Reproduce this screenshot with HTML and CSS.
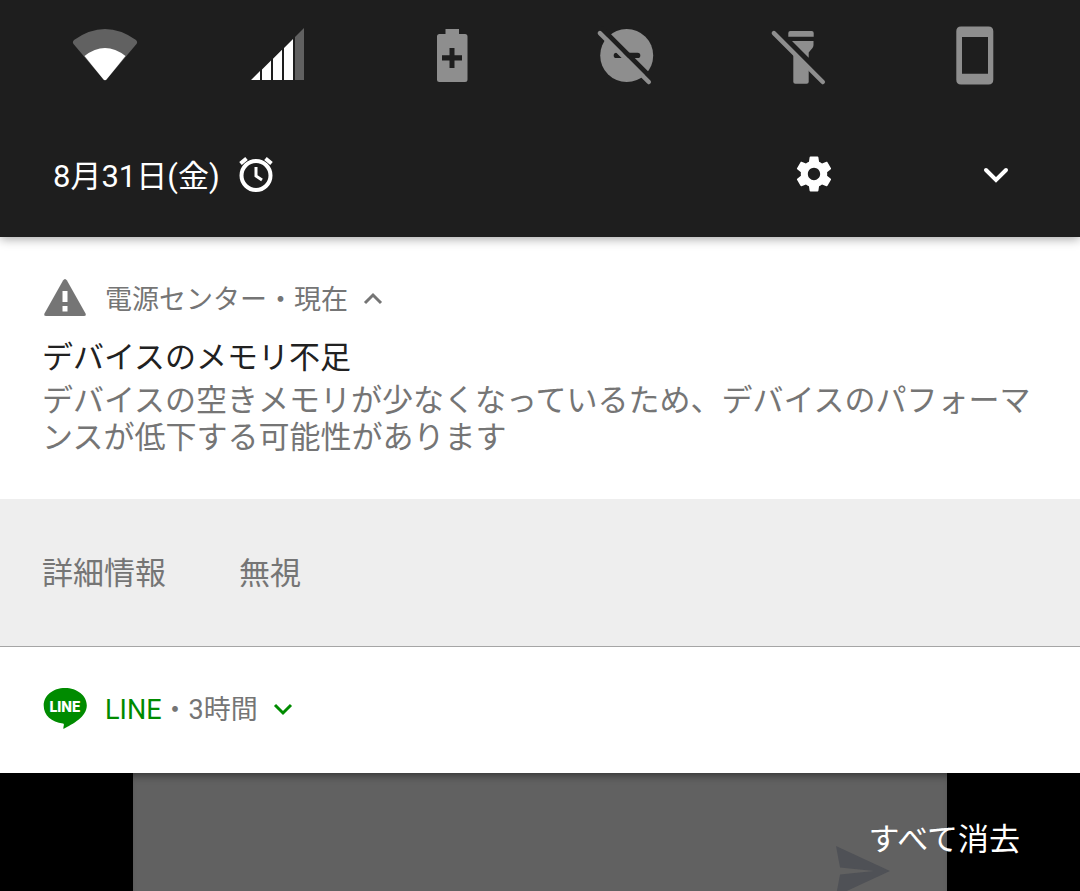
FILE: index.html
```html
<!DOCTYPE html>
<html lang="ja">
<head>
  <meta charset="UTF-8" />
  <meta name="viewport" content="width=device-width, initial-scale=1" />
  <title>通知</title>
  <link rel="stylesheet" href="styles.css">
</head>
<body>

  <header class="shade">
    <div class="toggles">
      <button type="button" class="toggle" aria-label="Wi-Fi">
        <svg viewBox="0 0 72 72">
          <path class="dim" d="M5 20 Q36 -2 67 20 Q69 22 67.500 24 L37.500 59.500 Q36 61 34.500 59.500 L4.500 24 Q3 22 5 20Z" />
          <path class="on" d="M15.500 36 Q36 20 56.500 36 L37.500 59.500 Q36 61 34.500 59.500Z" />
        </svg>
      </button>
      <button type="button" class="toggle" aria-label="モバイルデータ">
        <svg viewBox="0 0 72 72">
          <path class="on" d="M8 60 L17 51 V60Z M19 60 V49.500 L28 40.500 V60Z M30 60 V38.700 L39 29.700 V60Z M41 60 V28 L50 19 V60Z" />
          <path class="dim" d="M52 60 V17 L61 8 V60Z" />
        </svg>
      </button>
      <button type="button" class="toggle" aria-label="バッテリーセーバー">
        <svg viewBox="0 0 72 72">
          <path class="off" d="M28.500 9 H42 V14 H48 Q50.500 14 50.500 16.500 V59.500 Q50.500 62 48 62 H22.500 Q20 62 20 59.500 V16.500 Q20 14 22.500 14 H28.500Z" />
          <path class="cut" d="M32.500 28 H37.500 V35.300 H45 V40.500 H37.500 V48 H32.500 V40.500 H25 V35.300 H32.500Z" />
        </svg>
      </button>
      <button type="button" class="toggle" aria-label="サイレント モード">
        <svg viewBox="0 0 72 72">
          <circle class="off" cx="35.700" cy="35.500" r="26.500" />
          <rect class="cut" x="22.700" y="32.700" width="26.600" height="5.300" rx="2.600" />
          <path class="cut-line" d="M10 7.700 L62 59.700" />
          <path class="slash" d="M8.900 13.100 L57.800 62" />
        </svg>
      </button>
      <button type="button" class="toggle" aria-label="ライト">
        <svg viewBox="0 0 72 72">
          <path class="off" d="M25.300 11 H46.700 Q48.700 11 48.700 13 V16.700 H23.300 V13 Q23.300 11 25.300 11Z" />
          <path class="off" d="M27 21 H48.500 V25 Q48.500 26.500 47.500 28 L43.700 32.500 V37.700Z" />
          <path class="off" d="M28.300 32.500 L43.700 48 V61.700 Q43.700 63.700 41.700 63.700 H30.300 Q28.300 63.700 28.300 61.700Z" />
          <path class="slash" d="M8.900 13.100 L57.800 62" />
        </svg>
      </button>
      <button type="button" class="toggle" aria-label="画面の自動回転">
        <svg viewBox="0 0 72 72">
          <path class="off" fill-rule="evenodd" d="M22 6.500 H49.500 Q54.300 6.500 54.300 11.300 V59.700 Q54.300 64.500 49.500 64.500 H22 Q17.300 64.500 17.300 59.700 V11.300 Q17.300 6.500 22 6.500Z M23 17 V53.700 H49 V17Z" />
        </svg>
      </button>
    </div>

    <div class="status">
      <button type="button" class="date">
        <span>8月31日(金)</span>
        <svg class="alarm" viewBox="0 0 40 40" aria-hidden="true">
          <circle cx="20" cy="21.500" r="14.500" />
          <path d="M20 13 V22 L26 26" />
          <path class="bells" d="M4.500 9.500 L10.500 4.500 M29.500 4.500 L35.500 9.500" />
        </svg>
      </button>
      <button type="button" class="icon-btn" aria-label="設定">
        <svg viewBox="-0.5 -0.5 25 25">
          <path class="on" d="M19.430 12.980c.04-.32.07-.64.07-.98s-.03-.66-.07-.98l2.110-1.650c.19-.15.24-.42.12-.64l-2-3.460c-.12-.22-.39-.3-.61-.22l-2.490 1c-.52-.4-1.080-.73-1.690-.98l-.38-2.650C14.460 2.180 14.250 2 14 2h-4c-.25 0-.46.18-.49.42l-.38 2.650c-.61.25-1.170.59-1.690.98l-2.490-1c-.23-.09-.49 0-.61.22l-2 3.460c-.13.22-.07.49.12.64l2.110 1.650c-.04.32-.07.65-.07.98s.03.66.07.98l-2.110 1.650c-.19.15-.24.42-.12.64l2 3.460c.12.22.39.3.61.22l2.490-1c.52.4 1.080.73 1.690.98l.38 2.650c.03.24.24.42.49.42h4c.25 0 .46-.18.49-.42l.38-2.650c.61-.25 1.170-.59 1.690-.98l2.490 1c.23.09.49 0 .61-.22l2-3.460c.12-.22.07-.49-.12-.64l-2.110-1.650zM12 15.500c-1.930 0-3.500-1.570-3.500-3.500s1.570-3.500 3.500-3.500 3.500 1.570 3.500 3.500-1.570 3.500-3.500 3.500z" />
        </svg>
      </button>
      <button type="button" class="icon-btn" aria-label="展開">
        <svg viewBox="0 0 44 44">
          <path class="chevron" d="M12 18 L22 28 L32 18" />
        </svg>
      </button>
    </div>
  </header>

  <main>
    <article class="notice">
      <div class="notice-body">
        <div class="notice-head">
          <svg class="app-icon" viewBox="0 0 44 44" aria-hidden="true">
            <path fill="#757575" d="M20 3.500 Q22 0.500 24 3.500 L42.500 36.500 Q43.500 39 41 39 H3 Q0.500 39 1.500 36.500Z" />
            <path fill="#fff" d="M19.500 14 H24.500 V25 H19.500Z M19.500 29 H24.500 V34.500 H19.500Z" />
          </svg>
          <span class="app-title">電源センター・現在</span>
          <button type="button" class="expand" aria-label="折りたたむ">
            <svg viewBox="0 0 24 24"><path d="M4 16 L12 8 L20 16" /></svg>
          </button>
        </div>
        <h2>デバイスのメモリ不足</h2>
        <p>デバイスの空きメモリが少なくなっているため、デバイスのパフォーマンスが低下する可能性があります</p>
      </div>
      <div class="actions">
        <button type="button">詳細情報</button>
        <button type="button">無視</button>
      </div>
    </article>

    <article class="notice line">
      <div class="notice-head">
        <svg class="app-icon" viewBox="0 0 44 44" aria-hidden="true">
          <path fill="#008b00" d="M22 1 C34 1 43.800 8.500 43.800 18.500 C43.800 30 29.500 37 20.500 42 C20 39.500 22 37 20 36.500 C8.500 35 0.700 28.500 0.700 18.500 C0.700 8.500 10 1 22 1Z" />
          <text class="logo-text" x="22" y="25" text-anchor="middle">LINE</text>
        </svg>
        <span class="app-title"><span class="app-name">LINE</span>・3時間</span>
        <button type="button" class="expand" aria-label="展開">
          <svg viewBox="0 0 24 24"><path d="M4 8 L12 16 L20 8" /></svg>
        </button>
      </div>
    </article>
  </main>

  <footer class="backdrop">
    <div class="app-behind">
      <svg viewBox="0 0 54 50" aria-hidden="true">
        <path fill="#4f5156" d="M0 0 L54 25 L0 50 L4 28.500 L38 25 L4 21.500Z" />
      </svg>
    </div>
    <button type="button" class="clear">すべて消去</button>
  </footer>

</body>
</html>
```
FILE: styles.css
```css
* {
  box-sizing: border-box;
}

body {
  margin: 0;
  min-height: 100vh;
  display: flex;
  flex-direction: column;
  background: #000;
  color: #757575;
  font-family: Roboto, "Noto Sans CJK JP", sans-serif;
  font-size: 31px;
}

button {
  padding: 0;
  border: none;
  background: none;
  color: inherit;
  font: inherit;
  cursor: pointer;
}

svg {
  display: block;
}

/* quick settings */
.shade {
  position: relative;
  background: #1e1e1e;
  color: #fff;
  box-shadow: 0 2px 10px rgba(0, 0, 0, 0.35);
}

.toggles {
  display: grid;
  grid-template-columns: repeat(6, 1fr);
  padding: 20px 18px 0;
}

.toggle {
  display: flex;
  justify-content: center;
}

.toggle svg {
  width: 72px;
  height: 72px;
}

.on {
  fill: #fff;
}

.dim {
  fill: #616161;
}

.off {
  fill: #8e8e8e;
}

.cut {
  fill: #1e1e1e;
}

.cut-line {
  stroke: #1e1e1e;
  stroke-width: 5;
}

.slash {
  stroke: #8e8e8e;
  stroke-width: 4.5;
  stroke-linecap: round;
}

.status {
  display: flex;
  align-items: center;
  gap: 138px;
  height: 145px;
  padding: 18px 62px 0 53px;
}

.date {
  display: flex;
  align-items: center;
  gap: 16px;
  margin-right: auto;
}

.alarm {
  width: 40px;
  height: 40px;
  fill: none;
  stroke: #fff;
  stroke-width: 4;
}

.alarm path {
  stroke-width: 3;
}

.alarm .bells {
  stroke-width: 4;
}

.icon-btn svg {
  width: 44px;
  height: 44px;
}

.chevron {
  fill: none;
  stroke: #fff;
  stroke-width: 4;
  stroke-linecap: round;
}

/* notifications */
main {
  background: #fff;
}

.notice-body {
  padding: 40px 42px 43px;
}

.notice-head {
  display: flex;
  align-items: center;
  height: 44px;
  padding-left: 1px;
  font-size: 27px;
}

.app-icon {
  width: 44px;
  height: 44px;
  margin-right: 18px;
}

.app-title {
  padding-bottom: 4px;
}

.expand {
  margin-left: 13px;
}

.expand svg {
  width: 24px;
  height: 24px;
  fill: none;
  stroke: #757575;
  stroke-width: 3;
}

h2 {
  margin: 18px 0 0;
  color: #212121;
  font-size: 31px;
  font-weight: 400;
  line-height: 37px;
}

p {
  margin: 6px 0 0;
  line-height: 37px;
}

.actions {
  display: flex;
  align-items: center;
  gap: 73px;
  height: 148px;
  padding: 0 42px 4px;
  background: #eee;
  border-bottom: 1px solid #a5a5a5;
}

.line {
  padding: 40px 42px 42px;
}

.app-name {
  color: #008b00;
}

.line .expand svg {
  stroke: #008b00;
}

.logo-text {
  fill: #fff;
  font-family: Inter, sans-serif;
  font-size: 14px;
  font-weight: 800;
}

/* dimmed app under the shade */
.backdrop {
  flex: 1;
  display: grid;
  grid-template-columns: 133px 1fr 133px;
  height: 118px;
  overflow: hidden;
}

.app-behind {
  grid-area: 1 / 2;
  display: flex;
  justify-content: flex-end;
  align-items: flex-start;
  height: 118px;
  min-height: 100%;
  padding: 73px 57px 0 0;
  background: #616161;
  box-shadow: inset 0 8px 8px -6px rgba(0, 0, 0, 0.5);
}

.app-behind svg {
  flex: none;
  width: 54px;
  height: 50px;
}

.clear {
  grid-area: 1 / 1 / 2 / 4;
  justify-self: end;
  align-self: center;
  padding: 8px 60px 0 0;
  color: #fff;
}
```
